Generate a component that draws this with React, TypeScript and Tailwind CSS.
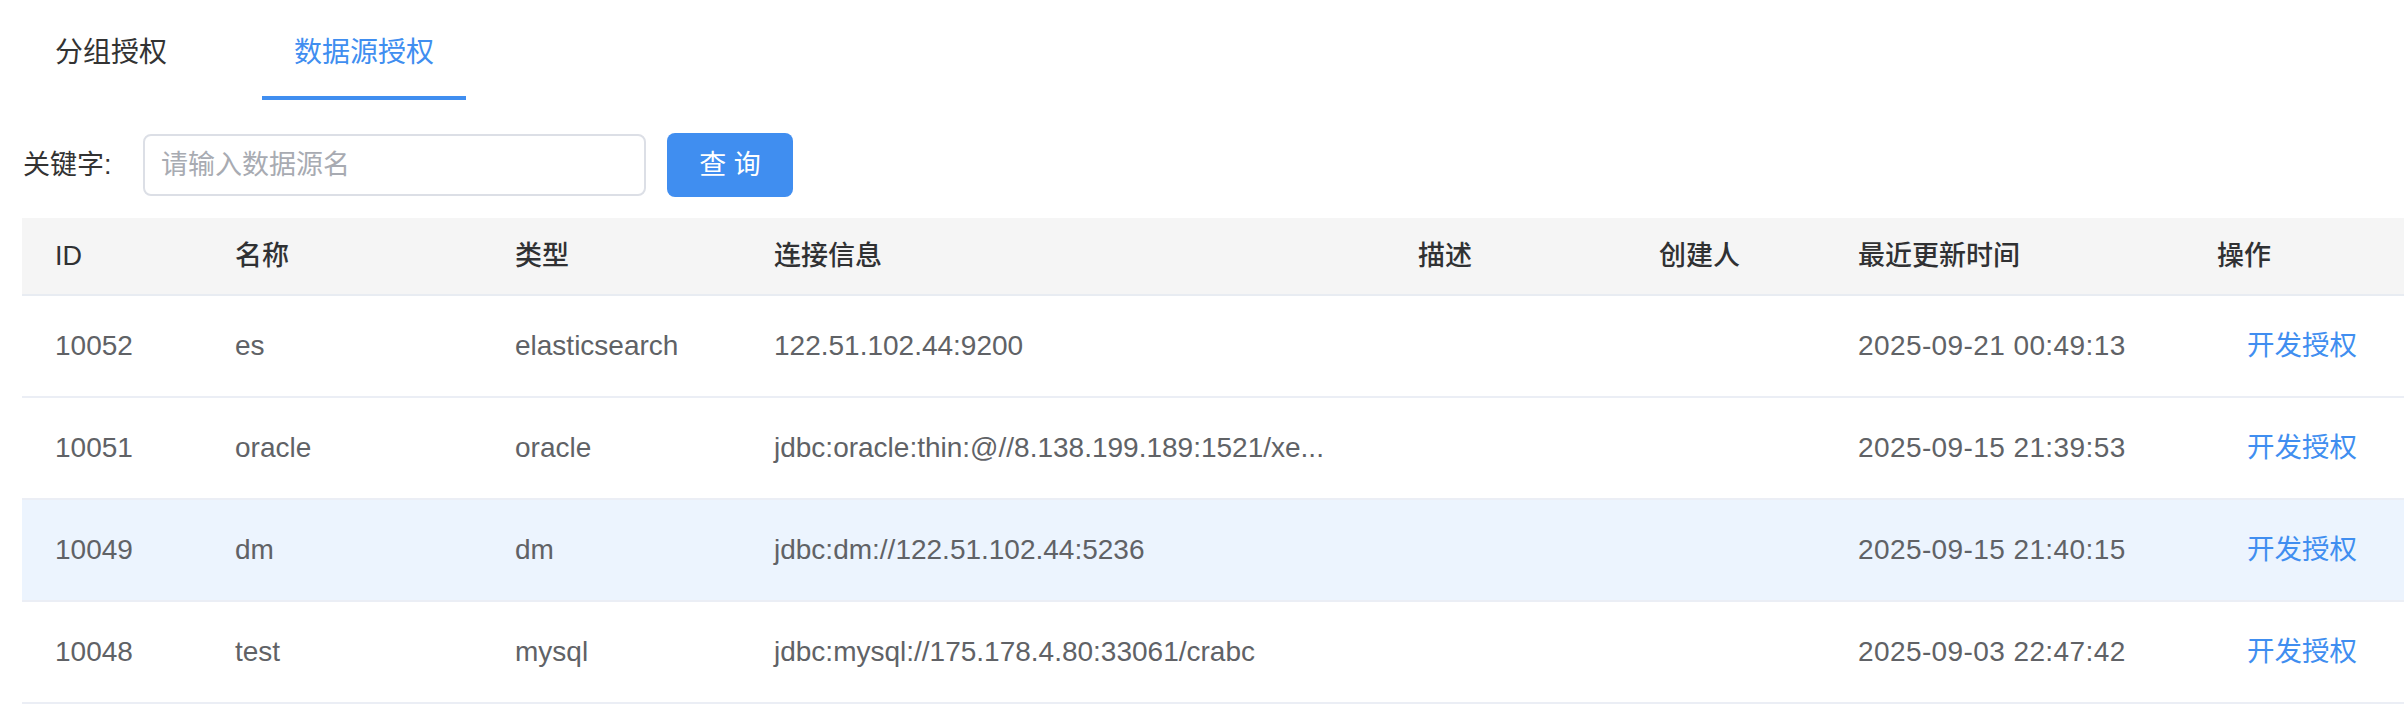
import { useState } from "react";

type Row = {
  id: number;
  name: string;
  type: string;
  url: string;
  desc: string;
  creator: string;
  updatedAt: string;
};

const rows: Row[] = [
  { id: 10052, name: "es", type: "elasticsearch", url: "122.51.102.44:9200", desc: "", creator: "", updatedAt: "2025-09-21 00:49:13" },
  { id: 10051, name: "oracle", type: "oracle", url: "jdbc:oracle:thin:@//8.138.199.189:1521/xe...", desc: "", creator: "", updatedAt: "2025-09-15 21:39:53" },
  { id: 10049, name: "dm", type: "dm", url: "jdbc:dm://122.51.102.44:5236", desc: "", creator: "", updatedAt: "2025-09-15 21:40:15" },
  { id: 10048, name: "test", type: "mysql", url: "jdbc:mysql://175.178.4.80:33061/crabc", desc: "", creator: "", updatedAt: "2025-09-03 22:47:42" },
];

const cols = "grid grid-cols-[180px_280px_259px_644px_241px_199px_359px_220px]";
const font = "font-['Liberation_Sans','Noto_Sans_CJK_SC',sans-serif]";

export default function App() {
  const [tab, setTab] = useState("source");
  const [keyword, setKeyword] = useState("");
  const [hovered] = useState(10049);

  return (
    <div className={`min-h-[710px] w-full bg-white ${font}`}>
      <div className="flex pl-[23px]">
        <button
          onClick={() => setTab("group")}
          className={`h-[100px] px-[32px] pt-[37px] text-[28px] leading-[32px] border-b-4 flex items-start ${
            tab === "group" ? "border-[#408ef0] text-[#408ef0]" : "border-transparent text-[#333]"
          }`}
        >
          分组授权
        </button>
        <button
          onClick={() => setTab("source")}
          className={`ml-[63px] h-[100px] px-[32px] pt-[37px] text-[28px] leading-[32px] border-b-4 flex items-start ${
            tab === "source" ? "border-[#408ef0] text-[#408ef0]" : "border-transparent text-[#333]"
          }`}
        >
          数据源授权
        </button>
      </div>

      <div className="mt-[33px] flex items-center pl-[23px]">
        <span className="text-[27px] text-[#333] w-[120px]">关键字:</span>
        <input
          value={keyword}
          onChange={(e) => setKeyword(e.target.value)}
          placeholder="请输入数据源名"
          className="h-[62px] w-[503px] rounded-[8px] border-2 border-[#dcdfe6] px-[16px] text-[27px] text-[#606266] outline-none placeholder:text-[#a8abb2]"
        />
        <button className="ml-[21px] h-[64px] w-[126px] rounded-[8px] bg-[#408ef0] text-[27px] text-white">
          查&nbsp;询
        </button>
      </div>

      <div className="ml-[22px] mt-[21px]">
        <div className={`${cols} h-[78px] items-center bg-[#f5f5f5] border-b-2 border-[#e8ecf2] text-[27px] font-medium text-[#303133]`}>
          <div className="pl-[33px]">ID</div>
          <div className="pl-[33px]">名称</div>
          <div className="pl-[33px]">类型</div>
          <div className="pl-[33px]">连接信息</div>
          <div className="pl-[33px]">描述</div>
          <div className="pl-[33px]">创建人</div>
          <div className="pl-[33px]">最近更新时间</div>
          <div className="pl-[33px]">操作</div>
        </div>
        {rows.map((r) => (
          <div
            key={r.id}
            className={`${cols} h-[102px] items-center border-b-2 border-[#ebeef5] text-[28px] text-[#606266] ${
              hovered === r.id ? "bg-[#ecf4fe]" : "bg-white"
            }`}
          >
            <div className="pl-[33px]">{r.id}</div>
            <div className="pl-[33px]">{r.name}</div>
            <div className="pl-[33px]">{r.type}</div>
            <div className="pl-[33px] pr-[33px] truncate">{r.url}</div>
            <div className="pl-[33px]">{r.desc}</div>
            <div className="pl-[33px]">{r.creator}</div>
            <div className="pl-[33px] tracking-[0.4px]">{r.updatedAt}</div>
            <div className="pl-[63px]">
              <button className="text-[#408ef0] text-[27.5px]">开发授权</button>
            </div>
          </div>
        ))}
      </div>
    </div>
  );
}
